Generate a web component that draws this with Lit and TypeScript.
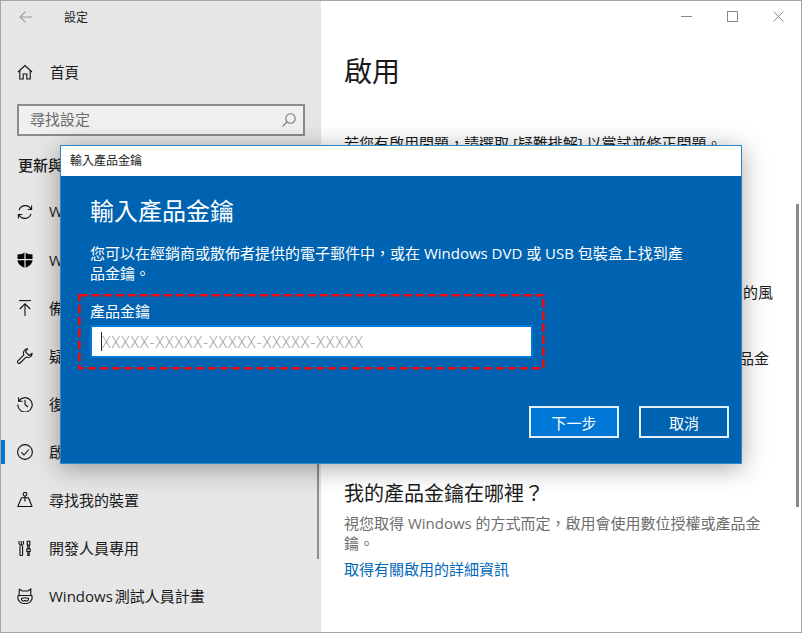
import { LitElement, html, css, svg } from "lit";
import { customElement } from "lit/decorators.js";

const i = (body: unknown) => html`<svg class="ic" viewBox="0 0 16 16" width="16" height="16" fill="none" stroke="#111" stroke-width="1.1">${body}</svg>`;

const icons = {
  home: i(svg`<path d="M1 8 8 1.5 15 8"/><path d="M2.8 6.6V15H6.2V10H9.8V15H13.2V6.6"/>`),
  sync: i(svg`<path d="M2 6.2A6.5 6.5 0 0 1 14 5.2"/><path d="M14.6 1.6V5.5H10.8"/><path d="M14 9.8A6.5 6.5 0 0 1 2 10.8"/><path d="M1.4 14.4V10.5H5.2"/>`),
  shield: i(svg`<path fill="#000" stroke="none" d="M8 .3C10 1.8 12.5 2.5 15.5 2.6V8C15.5 11.5 12.5 14.3 8 15.8 3.5 14.3.5 11.5.5 8V2.6C3.5 2.5 6 1.8 8 .3Z"/><path stroke="#e6e6e6" stroke-width="1.2" d="M8 0V16M0 7.6H16"/>`),
  backup: i(svg`<path d="M2 .6H14"/><path d="M8 16V4M2.8 9 8 3.8 13.2 9"/>`),
  wrench: i(svg`<path d="M10.7.8A4.3 4.3 0 0 0 6.9 6.9L.9 12.8A1.6 1.6 0 0 0 .9 14.8 1.6 1.6 0 0 0 3.1 15L9.1 9.1A4.3 4.3 0 0 0 15.2 5.3L12.2 7.5 8.6 3.8Z" stroke-linejoin="round"/>`),
  history: i(svg`<path d="M1.8 5.2A7.2 7.2 0 1 1 .8 8.5"/><path d="M1.6 1.2V5.3H5.6"/><path d="M8 4V8.5L11 11"/>`),
  check: i(svg`<circle cx="8" cy="8" r="7.4"/><path d="M4.3 8.3 7 11 11.8 5.5"/>`),
  find: i(svg`<circle cx="8" cy="2.2" r="1.8"/><path d="M8 4V9.5"/><path d="M4.5 5.8H11.5L15 14.5H.8Z" stroke-linejoin="round"/>`),
  dev: i(svg`<path d="M3 6V14.5A1.3 1.3 0 0 0 5.6 14.5V6"/><path d="M2 1 2 3.5A2.3 2.3 0 0 0 6.5 3.5L6.5 1M4.3 6V1"/><path d="M10.2 1.2H12.8V5H10.2ZM10.8 5V9M12.2 5V9M9.8 9H13.2V11.5H9.8ZM10.8 11.5V15.5H12.2V11.5"/>`),
  insider: i(svg`<path d="M2.2 1 5.2 3H10.8L13.8 1V7.5"/><path d="M2.2 1V7.5"/><path d="M2.2 7.5H1.2C.7 9.5.9 12 2.2 13 3.5 15.6 5.5 15.6 8 15.6S12.5 15.6 13.8 13C15.1 12 15.3 9.5 14.8 7.5H13.8"/><path d="M2.2 7.5H13.8M4.5 10.5C6 9.5 10 9.5 11.5 10.5 12.2 13 9.5 13.5 8 12.5 6.5 13.5 3.8 13 4.5 10.5Z"/><path d="M5.5 5.3H5.6M10.4 5.3H10.5"/>`),
};

const items = [
  [icons.sync, "Windows Update"],
  [icons.shield, "Windows 安全性"],
  [icons.backup, "備份"],
  [icons.wrench, "疑難排解"],
  [icons.history, "復原"],
  [icons.check, "啟用", true],
  [icons.find, "尋找我的裝置"],
  [icons.dev, "開發人員專用"],
  [icons.insider, "Windows 測試人員計畫"],
] as const;

@customElement("app-root")
export class AppRoot extends LitElement {
  static styles = css`
    :host {
      display: block;
      width: 802px;
      height: 633px;
      font-family: "Open Sans", "Noto Sans CJK TC", sans-serif;
      font-size: 15px;
      color: #1a1a1a;
    }
    .window {
      position: relative;
      box-sizing: border-box;
      width: 802px;
      height: 633px;
      border: 1px solid #a5a5a5;
      display: flex;
      overflow: hidden;
      background: #fff;
    }
    .side {
      position: relative;
      width: 320px;
      flex: none;
      background: #e6e6e6;
    }
    .side-head {
      height: 31px;
      margin-bottom: 16px;
      display: flex;
      align-items: center;
      padding-left: 18px;
      gap: 32px;
      font-size: 12px;
    }
    .row {
      position: relative;
      height: 48px;
      display: flex;
      align-items: center;
      gap: 16px;
      padding-left: 16px;
      white-space: nowrap;
      word-spacing: -2px;
    }
    .row span { padding-bottom: 2px; }
    .home { font-size: 14.5px; gap: 17px; }
    .ic { flex: none; display: block; }
    .search {
      box-sizing: border-box;
      margin: 8px 0 0 16px;
      width: 288px;
      height: 32px;
      border: 2px solid #8c8c8c;
      background: #f0f0f0;
      color: #6b6b6b;
      display: flex;
      align-items: center;
      justify-content: space-between;
      padding: 0 7px 0 11px;
    }
    .search span { padding-bottom: 4px; }
    .section {
      margin: 14px 0 8px 17px;
      height: 30px;
      line-height: 30px;
      font-weight: 500;
      white-space: nowrap;
    }
    .sel::before {
      content: "";
      position: absolute;
      left: 0;
      top: 12px;
      width: 4px;
      height: 24px;
      background: #0078d7;
    }
    .side-thumb {
      position: absolute;
      right: 2px;
      top: 203px;
      width: 2px;
      height: 355px;
      background: #8e8e8e;
    }
    .main {
      position: relative;
      flex: 1;
      padding-left: 23px;
    }
    .controls {
      display: flex;
      justify-content: flex-end;
      height: 31px;
      margin-left: -23px;
    }
    .ctl {
      width: 46px;
      display: flex;
      align-items: center;
      justify-content: center;
    }
    h1 {
      margin: 19px 0 0;
      font-size: 28px;
      line-height: 40px;
      font-weight: 400;
    }
    .intro { margin: 42px 0 0; line-height: 20px; white-space: nowrap; }
    .peek { line-height: 20px; white-space: nowrap; text-align: right; margin: 0; }
    .peek.a { width: 429px; margin-top: 129px; }
    .peek.b { width: 425px; margin-top: 46px; }
    h2 {
      margin: 111px 0 0;
      font-size: 20px;
      line-height: 30px;
      font-weight: 400;
    }
    .desc {
      margin: 4px 0 0;
      width: 422px;
      line-height: 20px;
      color: #6d6d6d;
    }
    .link { margin-top: 6px; line-height: 20px; color: #0067b8; }
    .main-thumb {
      position: absolute;
      right: 2px;
      top: 203px;
      width: 3px;
      height: 303px;
      background: #8a8a8a;
    }
    .dialog {
      position: absolute;
      left: 59px;
      top: 144px;
      box-sizing: border-box;
      width: 682px;
      height: 319px;
      border: 1px solid #2f86c4;
      background: #0063b1;
      color: #fff;
      box-shadow: 0 4px 24px rgba(0, 0, 0, 0.35);
      display: flex;
      flex-direction: column;
    }
    .dlg-title {
      height: 30px;
      flex: none;
      background: #fff;
      color: #1a1a1a;
      font-size: 12px;
      line-height: 30px;
      padding-left: 9px;
    }
    .dlg-body {
      flex: 1;
      display: flex;
      flex-direction: column;
      padding: 17px 12px 25px 29px;
    }
    .dlg-h {
      font-size: 24px;
      line-height: 36px;
      font-weight: 400;
      margin: 0;
    }
    .dlg-text {
      margin: 14px 0 0;
      width: 603px;
      line-height: 20px;
    }
    .field {
      position: relative;
      margin-top: 18px;
      line-height: 20px;
      width: 443px;
    }
    .input {
      box-sizing: border-box;
      margin-top: 4px;
      height: 33px;
      border: 2px solid #0078d7;
      background: #fff;
      display: flex;
      align-items: center;
      padding-left: 9px;
    }
    .caret { width: 1px; height: 19px; background: #222; flex: none; }
    .ph { color: #9a9a9a; font-size: 16px; font-weight: 300; letter-spacing: 0.9px; }
    .marks {
      position: absolute;
      left: -12px;
      top: -7px;
      width: 467px;
      height: 76px;
      pointer-events: none;
    }
    .actions {
      margin-top: auto;
      display: flex;
      justify-content: flex-end;
      gap: 20px;
    }
    .btn {
      box-sizing: border-box;
      width: 90px;
      height: 32px;
      border: 2px solid #e6f0f8;
      display: flex;
      align-items: center;
      justify-content: center;
    }
    .btn.primary { background: #0078d7; }
  `;

  render() {
    return html`
      <div class="window">
        <div class="side">
          <div class="side-head">
            <svg width="13" height="12" viewBox="0 0 13 12" fill="none" stroke="#9a9a9a" stroke-width="1.1"><path d="M6.5.6 1 6 6.5 11.4M1 6H13"/></svg>
            <span>設定</span>
          </div>
          <div class="row home">${icons.home}<span>首頁</span></div>
          <div class="search">
            <span>尋找設定</span>
            <svg width="14" height="14" viewBox="0 0 14 14" fill="none" stroke="#777" stroke-width="1.1"><circle cx="8.5" cy="5.5" r="4.7"/><path d="M5 9 .7 13.3"/></svg>
          </div>
          <div class="section">更新與安全性</div>
          ${items.map(
            ([ic, t, sel]: readonly unknown[]) =>
              html`<div class="row ${sel ? "sel" : ""}">${ic}<span>${t}</span></div>`
          )}
          <div class="side-thumb"></div>
        </div>
        <div class="main">
          <div class="controls">
            <div class="ctl"><svg width="11" height="11" fill="none" stroke="#8a8a8a"><path d="M0 5.5H11"/></svg></div>
            <div class="ctl"><svg width="11" height="11" fill="none" stroke="#8a8a8a"><rect x=".5" y=".5" width="10" height="10"/></svg></div>
            <div class="ctl"><svg width="11" height="11" fill="none" stroke="#8a8a8a"><path d="M.5.5 10.5 10.5M10.5.5.5 10.5"/></svg></div>
          </div>
          <h1>啟用</h1>
          <p class="intro">若您有啟用問題&#xFF0C;請選取 [疑難排解] 以嘗試並修正問題。</p>
          <p class="peek a">變更您裝置的風</p>
          <p class="peek b">變更產品金</p>
          <h2>我的產品金鑰在哪裡&#xFF1F;</h2>
          <p class="desc">視您取得 Windows 的方式而定&#xFF0C;啟用會使用數位授權或產品金鑰。</p>
          <div class="link">取得有關啟用的詳細資訊</div>
          <div class="main-thumb"></div>
        </div>
        <div class="dialog">
          <div class="dlg-title">輸入產品金鑰</div>
          <div class="dlg-body">
            <h3 class="dlg-h">輸入產品金鑰</h3>
            <p class="dlg-text">您可以在經銷商或散佈者提供的電子郵件中&#xFF0C;或在 Windows DVD 或 USB 包裝盒上找到產品金鑰。</p>
            <div class="field">
              <div>產品金鑰</div>
              <div class="input"><span class="caret"></span><span class="ph">XXXXX-XXXXX-XXXXX-XXXXX-XXXXX</span></div>
              <svg class="marks" viewBox="0 0 467 76" fill="none"><rect x="1.3" y="1.3" width="464" height="73" stroke="#f00c14" stroke-width="2.6" stroke-dasharray="8.5 3.5"/></svg>
            </div>
            <div class="actions">
              <div class="btn primary">下一步</div>
              <div class="btn">取消</div>
            </div>
          </div>
        </div>
      </div>
    `;
  }
}
